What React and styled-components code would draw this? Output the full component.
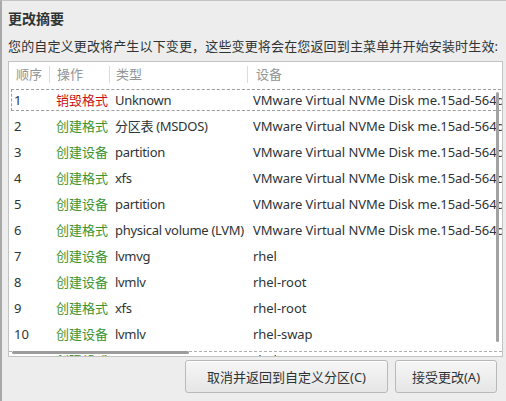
import React from "react";
import styled, { createGlobalStyle } from "styled-components";

const GlobalStyle = createGlobalStyle`
  html, body {
    margin: 0;
    padding: 0;
    background: #ededed;
  }
  * {
    box-sizing: border-box;
  }
`;

const FONT = `"Noto Sans", "Noto Sans CJK SC", sans-serif`;

const Dialog = styled.div`
  width: 506px;
  height: 401px;
  background: #ededed;
  border-top: 1px solid #c4c4c4;
  border-left: 2px solid #a9a9a9;
  padding: 8px 3px 0 6px;
  font-family: ${FONT};
  color: #2e3436;
  display: flex;
  flex-direction: column;
  overflow: hidden;
`;

const Title = styled.div`
  font-size: 14px;
  font-weight: bold;
  line-height: 20px;
  color: #2e3436;
`;

const Description = styled.div`
  margin-top: 7px;
  font-size: 13px;
  line-height: 20px;
  letter-spacing: 0.15px;
  white-space: nowrap;
`;

const ListBox = styled.div`
  position: relative;
  margin-top: 5px;
  height: 296px;
  background: #fff;
  border: 1px solid #c3c3c3;
  overflow: hidden;
  font-size: 13px;
  white-space: nowrap;
`;

const Grid = styled.div`
  display: grid;
  grid-template-columns: 41px 60px 138px 300px;
`;

const HeaderCell = styled.div`
  height: 25px;
  line-height: 25px;
  padding-left: ${(p) => p.$pad ?? 7}px;
  color: #929595;
  position: relative;
  &:not(:last-child)::after {
    content: "";
    position: absolute;
    right: 0;
    top: 4px;
    bottom: 4px;
    width: 1px;
    background: #dcdcdc;
  }
`;

const Row = styled.div`
  display: contents;
`;

const Cell = styled.div`
  height: 26px;
  line-height: 26px;
  padding-left: ${(p) => p.$pad ?? 5}px;
  color: ${(p) => p.$color || "#2e3436"};
  letter-spacing: ${(p) => p.$spacing ?? 0}px;
  overflow: hidden;
`;

const Focus = styled.div`
  position: absolute;
  left: 2px;
  right: -4px;
  top: 27px;
  height: 22px;
  border: 1px dashed #9d9d9d;
  pointer-events: none;
`;

const VScroll = styled.div`
  position: absolute;
  right: 3px;
  top: 30px;
  height: 250px;
  width: 3px;
  border-radius: 2px;
  background: #a2a2a2;
`;

const Undershoot = styled.div`
  position: absolute;
  left: 0;
  right: 0;
  bottom: 1px;
  height: 4px;
  background: #fff;
  border-top: 1px dashed #b0b0b0;
`;

const HScroll = styled.div`
  position: absolute;
  left: 3px;
  bottom: 2px;
  width: 177px;
  height: 3px;
  border-radius: 2px;
  background: #9c9c9c;
`;

const ButtonRow = styled.div`
  display: flex;
  justify-content: flex-end;
  gap: 7px;
  margin-top: 3px;
  padding-right: 6px;
`;

const Button = styled.button`
  width: ${(p) => p.$w}px;
  height: 33px;
  font-family: ${FONT};
  font-size: 13px;
  color: #2e3436;
  background: linear-gradient(#f6f6f6, #e6e6e6);
  border: 1px solid #b9b9b9;
  border-radius: 3px;
  box-shadow: inset 0 1px #fff;
  padding: 0;
`;

const RED = "#cc1111";
const GREEN = "#3d9430";
const DISK = "VMware Virtual NVMe Disk me.15ad-564d52b5";

const rows = [
  ["1", "销毁格式", RED, "Unknown", DISK],
  ["2", "创建格式", GREEN, "分区表 (MSDOS)", DISK],
  ["3", "创建设备", GREEN, "partition", DISK],
  ["4", "创建格式", GREEN, "xfs", DISK],
  ["5", "创建设备", GREEN, "partition", DISK],
  ["6", "创建格式", GREEN, "physical volume (LVM)", DISK],
  ["7", "创建设备", GREEN, "lvmvg", "rhel"],
  ["8", "创建设备", GREEN, "lvmlv", "rhel-root"],
  ["9", "创建格式", GREEN, "xfs", "rhel-root"],
  ["10", "创建设备", GREEN, "lvmlv", "rhel-swap"],
  ["11", "创建格式", GREEN, "swap", "rhel-swap"],
];

export default function App() {
  return (
    <>
      <GlobalStyle />
      <Dialog>
        <Title>更改摘要</Title>
        <Description>
          您的自定义更改将产生以下变更，这些变更将会在您返回到主菜单并开始安装时生效:
        </Description>
        <ListBox>
          <Grid>
            <HeaderCell>顺序</HeaderCell>
            <HeaderCell>操作</HeaderCell>
            <HeaderCell $pad={6}>类型</HeaderCell>
            <HeaderCell $pad={8}>设备</HeaderCell>
            {rows.map(([n, op, color, type, dev]) => (
              <Row key={n}>
                <Cell>{n}</Cell>
                <Cell $pad={6} $color={color}>{op}</Cell>
                <Cell $spacing={-0.3}>{type}</Cell>
                <Cell $spacing={-0.05}>{dev}</Cell>
              </Row>
            ))}
          </Grid>
          <Focus />
          <VScroll />
          <Undershoot />
          <HScroll />
        </ListBox>
        <ButtonRow>
          <Button $w={203}>取消并返回到自定义分区(C)</Button>
          <Button $w={102}>接受更改(A)</Button>
        </ButtonRow>
      </Dialog>
    </>
  );
}
